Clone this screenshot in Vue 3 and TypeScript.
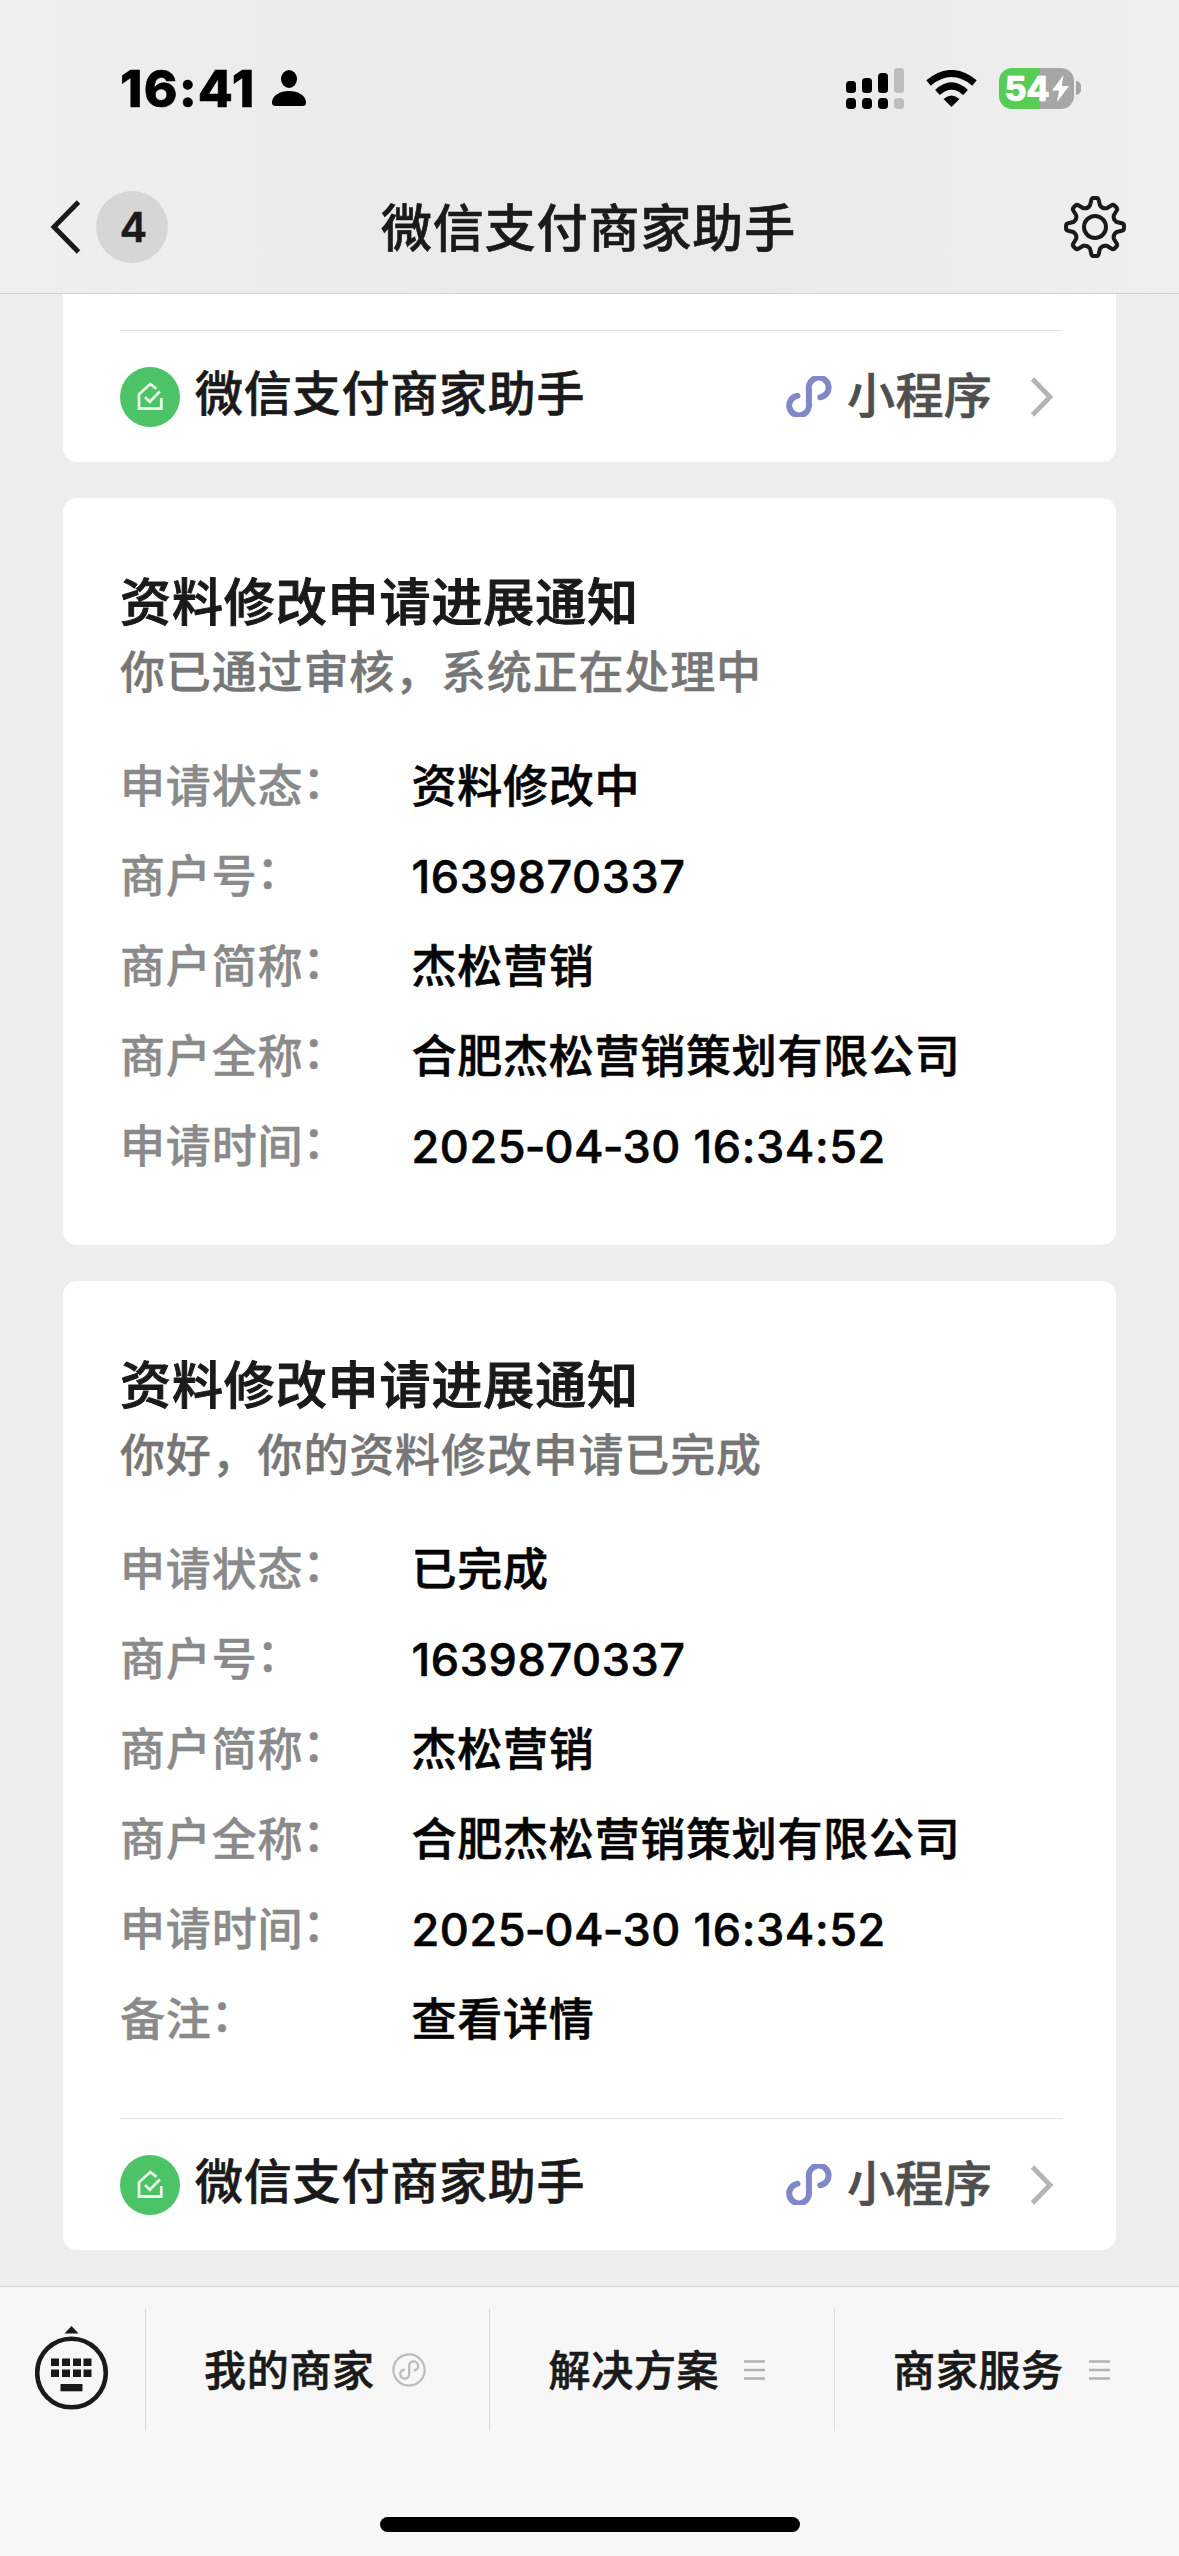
<script setup lang="ts">
interface Row {
  label: string
  value: string
}
interface Notice {
  title: string
  desc: string
  rows: Row[]
  footer: boolean
}

const baseRows: Row[] = [
  { label: '商户号', value: '1639870337' },
  { label: '商户简称', value: '杰松营销' },
  { label: '商户全称', value: '合肥杰松营销策划有限公司' },
  { label: '申请时间', value: '2025-04-30 16:34:52' },
]

const notices: Notice[] = [
  { title: '', desc: '', rows: [], footer: true },
  {
    title: '资料修改申请进展通知',
    desc: '你已通过审核，系统正在处理中',
    rows: [{ label: '申请状态', value: '资料修改中' }, ...baseRows],
    footer: false,
  },
  {
    title: '资料修改申请进展通知',
    desc: '你好，你的资料修改申请已完成',
    rows: [
      { label: '申请状态', value: '已完成' },
      ...baseRows,
      { label: '备注', value: '查看详情' },
    ],
    footer: true,
  },
]

const menus: { name: string; mini: boolean }[] = [
  { name: '我的商家', mini: true },
  { name: '解决方案', mini: false },
  { name: '商家服务', mini: false },
]

const isNumeric = (s: string): boolean => /^[\d\s:-]+$/.test(s)

// Hyphens are kept as their own pieces so that they can be set tighter
const pieces = (s: string): string[] => s.split(/(-)/)

// Eight-toothed gear outline centred on the origin
function gearPath(): string {
  const parts: string[] = []
  const at = (r: number, deg: number) => {
    const a = ((deg - 90) * Math.PI) / 180
    return `${(r * Math.cos(a)).toFixed(2)} ${(r * Math.sin(a)).toFixed(2)}`
  }
  for (let i = 0; i < 8; i++) {
    const c = i * 45
    parts.push(`${i === 0 ? 'M' : 'L'}${at(22.2, c - 13)}`)
    parts.push(`L${at(27, c - 8)}`)
    parts.push(`Q${at(29, c - 6.5)} ${at(29, c - 3.5)}`)
    parts.push(`L${at(29, c + 3.5)}`)
    parts.push(`Q${at(29, c + 6.5)} ${at(27, c + 8)}`)
    parts.push(`L${at(22.2, c + 13)}`)
    parts.push(`Q${at(19.4, c + 22.5)} ${at(22.2, c + 32)}`)
  }
  return parts.join(' ') + ' Z'
}
const gear = gearPath()
const keyX = [16, 27, 38, 48.5]
</script>

<template>
  <div class="screen">
    <header class="top">
      <div class="status">
        <div class="status-left">
          <span class="time">16:41</span>
          <svg class="person" width="34" height="36" viewBox="0 0 34 36">
            <ellipse cx="17" cy="9" rx="8" ry="9" />
            <path d="M0 32.5C0 25.500 8 21 17 21S34 25.500 34 32.500Q34 36 30.500 36H3.500Q0 36 0 32.500Z" />
          </svg>
        </div>
        <div class="status-right">
          <svg class="signal" width="58" height="41" viewBox="0 0 58 41">
            <rect x="0" y="13" width="10" height="12" rx="3.500" />
            <rect x="16" y="10" width="10" height="15" rx="3.500" />
            <rect x="32" y="5" width="10" height="20" rx="3.500" />
            <rect x="48" y="0" width="10" height="25" rx="3.500" fill="#bdbdbd" />
            <rect x="0" y="30" width="10" height="11" rx="3.800" />
            <rect x="16" y="30" width="10" height="11" rx="3.800" />
            <rect x="32" y="30" width="10" height="11" rx="3.800" />
            <rect x="48" y="30" width="10" height="11" rx="3.800" fill="#bdbdbd" />
          </svg>
          <svg class="wifi" width="51" height="37" viewBox="0 0 51 37">
            <path d="M25.500 37L17.500 29Q25.500 22 33.500 29Z" />
            <path d="M11.500 22.500Q25.500 9.500 39.500 22.500" fill="none" stroke="#000" stroke-width="7" />
            <path d="M2.500 13Q25.500 -6 48.500 13" fill="none" stroke="#000" stroke-width="7" />
          </svg>
          <div class="battery">
            <span class="level">54</span>
            <svg width="17" height="27" viewBox="0 0 17 27">
              <path d="M11.500 0L0 15.500H7L5 27L17 11H9.800Z" fill="#fff" />
            </svg>
          </div>
          <div class="battery-cap"></div>
        </div>
      </div>
      <nav class="nav">
        <div class="nav-back">
          <svg width="32" height="58" viewBox="0 0 32 58">
            <path d="M28.500 4L4 29L28.500 54" fill="none" stroke="#1a1a1a" stroke-width="5" />
          </svg>
          <span class="badge">4</span>
        </div>
        <h1>微信支付商家助手</h1>
        <svg class="gear" width="64" height="64" viewBox="-32 -32 64 64">
          <path :d="gear" fill="none" stroke="#1a1a1a" stroke-width="4" stroke-linejoin="round" />
          <circle r="11" fill="none" stroke="#1a1a1a" stroke-width="4" />
        </svg>
      </nav>
    </header>

    <main class="feed">
      <section v-for="(n, i) in notices" :key="i" class="card" :class="{ clipped: !n.title }">
        <div v-if="n.title" class="body">
          <h2>{{ n.title }}</h2>
          <p>{{ n.desc }}</p>
          <dl>
            <div v-for="r in n.rows" :key="r.label" class="row">
              <dt>{{ r.label }}<span class="colon">：</span></dt>
              <dd v-if="isNumeric(r.value)" class="numeric"><span v-for="(s, k) in pieces(r.value)" :key="k" :class="{ hyphen: s === '-' }">{{ s }}</span></dd>
              <dd v-else>{{ r.value }}</dd>
            </div>
          </dl>
        </div>
        <footer v-if="n.footer" class="card-foot">
          <svg class="logo" width="60" height="60" viewBox="0 0 60 60">
            <circle cx="30" cy="30" r="30" fill="#4bc366" />
            <g fill="none" stroke="#e4f8e4" stroke-width="2.800">
              <path d="M36.500 21.800L30.300 17L19 27.300V41.500H41.300V31" />
              <path d="M25 30L29.800 34.700L39.800 24.500" />
            </g>
          </svg>
          <span class="app">微信支付商家助手</span>
          <svg class="link" width="46" height="41" viewBox="0 0 46 41">
            <path d="M34.300 21.300A9.900 9.900 0 1 0 22.900 13V28A9.900 9.900 0 1 1 11.500 19.700" fill="none" stroke="#8188c9" stroke-width="6" stroke-linecap="round" />
          </svg>
          <span class="mini">小程序</span>
          <svg class="arrow" width="24" height="40" viewBox="0 0 24 40">
            <path d="M2.500 2L20 20L2.500 38" fill="none" stroke="#b4b4b4" stroke-width="4.800" />
          </svg>
        </footer>
      </section>
    </main>

    <footer class="tabbar">
      <div class="tabs">
        <div class="keyboard">
          <svg width="74" height="86" viewBox="0 0 74 86" fill="#1a1a1a">
            <path d="M36.500 1L43.500 8.500H29.500Z" />
            <circle cx="36.500" cy="48" r="34.300" fill="none" stroke="#1a1a1a" stroke-width="4.600" />
            <rect v-for="x in keyX" :key="x" :x="x" y="33.500" width="8" height="7.500" />
            <rect v-for="x in keyX" :key="x + 100" :x="x" y="44.500" width="8" height="7.500" />
            <rect x="25.500" y="59" width="22" height="7.300" />
          </svg>
        </div>
        <div v-for="m in menus" :key="m.name" class="tab">
          <span>{{ m.name }}</span>
          <svg v-if="m.mini" class="mini-icon" width="34" height="34" viewBox="0 0 34 34" fill="none" stroke="#bcbcbc">
            <circle cx="17" cy="17" r="15.600" stroke-width="2.200" />
            <path d="M22.500 17.300A4.500 4.500 0 1 0 17.200 13V21A4.500 4.500 0 1 1 11.900 16.700" stroke-width="2.400" stroke-linecap="round" />
          </svg>
          <svg v-else class="lines" width="21" height="20" viewBox="0 0 21 20">
            <path d="M0 1.500H21M0 10H21M0 18.500H21" stroke="#b2b2b2" stroke-width="2.600" />
          </svg>
        </div>
      </div>
      <div class="home"></div>
    </footer>
  </div>
</template>

<style>
body {
  margin: 0;
  background: #ededed;
}
</style>

<style scoped>
.screen {
  width: 1179px;
  height: 2556px;
  display: flex;
  flex-direction: column;
  overflow: hidden;
  background: #ededed;
  color: #1a1a1a;
  font-family: Inter, "Noto Sans CJK SC", sans-serif;
  font-weight: 500;
  -webkit-text-stroke: 0.6px;
}
h1,
h2,
p,
dl,
dt,
dd {
  margin: 0;
  font-weight: 500;
}
svg {
  display: block;
  flex: none;
}
.top {
  flex: none;
  box-sizing: border-box;
  height: 294px;
  border-bottom: 1px solid #d2d2d2;
  background: linear-gradient(90deg, #efefef, #eaeaea 45%, #eaeaea 60%, #efefef);
}
.status {
  height: 176px;
  display: flex;
  justify-content: space-between;
  box-sizing: border-box;
  padding: 0 98px 0 120px;
}
.status-left,
.status-right {
  display: flex;
  align-items: center;
  height: 176px;
}
.time {
  width: 152px;
  font-size: 51px;
  font-weight: 800;
  letter-spacing: 1.2px;
  color: #000;
}
.battery {
  width: 75px;
  height: 41px;
  margin-left: 22px;
  border-radius: 13px;
  display: flex;
  align-items: center;
  justify-content: center;
  gap: 2px;
  background: linear-gradient(90deg, #57cd56 55%, #a6a6a6 55%);
}
.wifi {
  margin-left: 22px;
}
.level {
  font-size: 34px;
  line-height: 41px;
  font-weight: 800;
  letter-spacing: -0.2px;
  color: #fff;
}
.battery-cap {
  width: 5px;
  height: 14px;
  margin-left: 2px;
  border-radius: 0 5px 5px 0;
  background: #a6a6a6;
}
.nav {
  height: 102px;
  display: grid;
  grid-template-columns: 1fr auto 1fr;
  align-items: center;
  padding: 0 52px 0 50px;
}
.nav-back {
  display: flex;
  align-items: center;
  gap: 14px;
}
.badge {
  box-sizing: border-box;
  width: 72px;
  height: 72px;
  padding-left: 3px;
  border-radius: 50%;
  background: #d6d6d6;
  font-size: 41px;
  font-weight: 600;
  line-height: 72px;
  text-align: center;
}
h1 {
  padding-top: 3px;
  font-size: 51px;
  letter-spacing: 0.9px;
  line-height: 72px;
}
.gear {
  justify-self: end;
}
.feed {
  flex: none;
  height: 1992px;
  display: flex;
  flex-direction: column;
  gap: 36px;
  padding: 0 63px;
}
.card {
  background: #fff;
  border-radius: 14px;
  padding: 0 57px;
}
.card.clipped {
  border-radius: 0 0 14px 14px;
  padding-top: 36px;
}
.body {
  padding: 69px 0 53px;
}
h2 {
  font-size: 51px;
  line-height: 72px;
  letter-spacing: 0.9px;
  -webkit-text-stroke: 1px;
}
p {
  font-size: 45px;
  line-height: 68px;
  letter-spacing: 0.85px;
  color: #767676;
  -webkit-text-stroke: 0.4px;
}
dl {
  padding-top: 35px;
}
.row {
  display: flex;
  height: 90px;
  align-items: center;
  font-size: 45px;
  line-height: 90px;
}
dt {
  width: 291.5px;
  letter-spacing: 0.85px;
  color: #8a8a8a;
  -webkit-text-stroke: 0.4px;
}
.colon {
  position: relative;
  left: -1px;
  top: -4px;
}
dd {
  letter-spacing: 0.75px;
  color: #050505;
}
dd.numeric {
  letter-spacing: 0.6px;
}
.hyphen {
  margin: 0 -1.6px;
}
.card-foot {
  height: 131px;
  border-top: 1px solid #e2e2e2;
  display: flex;
  align-items: center;
  margin-right: -4px;
}
.app {
  margin-left: 15px;
  margin-right: auto;
  padding-bottom: 6px;
  font-size: 48px;
  letter-spacing: 0.8px;
  line-height: 60px;
}
.mini {
  margin: 0 38px 0 15px;
  padding-bottom: 2px;
  font-size: 48px;
  letter-spacing: 0.3px;
  line-height: 60px;
  color: #4f4f4f;
}
.arrow {
  margin-right: 9px;
}
.tabbar {
  flex: 1;
  border-top: 1px solid #d6d6d6;
  background: #f7f7f7;
}
.tabs {
  display: flex;
  height: 122px;
  padding-top: 22px;
}
.keyboard {
  box-sizing: border-box;
  width: 144.5px;
  padding: 16px 0 0 35px;
}
.tab {
  box-sizing: border-box;
  width: 344.5px;
  height: 122px;
  padding-left: 58.5px;
  border-left: 1px solid #dadada;
  display: flex;
  align-items: center;
  font-size: 42px;
  letter-spacing: 0.7px;
}
.tab span {
  padding-bottom: 5px;
}
.mini-icon {
  margin-left: 17px;
}
.lines {
  margin-left: 25px;
}
.home {
  width: 420px;
  height: 15px;
  margin: 86px auto 0;
  border-radius: 8px;
  background: #000;
}
</style>
